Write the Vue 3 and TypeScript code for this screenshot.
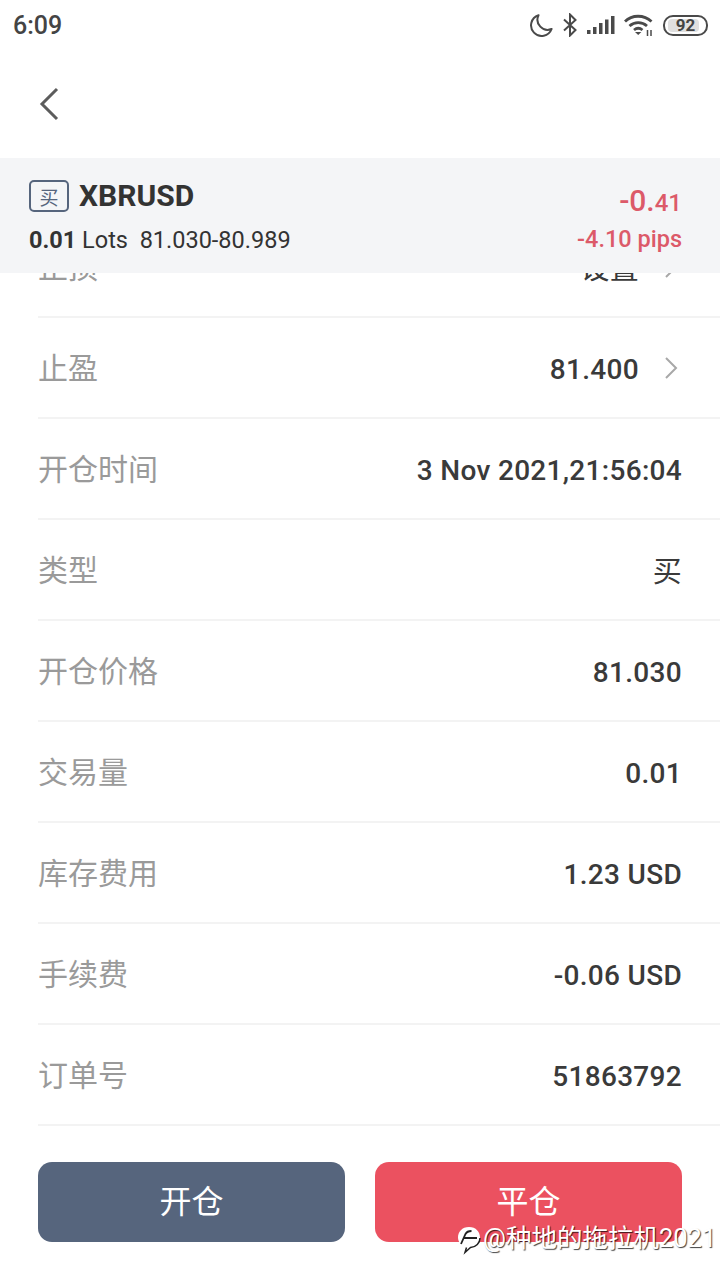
<template>
  <div class="page">
    <div class="status">
      <span class="status__time">6:09</span>
      <div class="status__icons">
        <svg class="ic-moon" width="24" height="24" viewBox="0 0 24 24">
          <path d="M9.500 2.200A10.600 10.600 0 1 0 22.600 16 A10.200 10.200 0 0 1 9.500 2.200Z" fill="none" stroke="#4a4a4a" stroke-width="2" stroke-linejoin="round" />
        </svg>
        <svg width="16" height="24" viewBox="0 0 16 24">
          <path d="M2 6.500 13.500 17 8 22.500V1.500L13.500 7 2 17.500" fill="none" stroke="#4a4a4a" stroke-width="2" />
        </svg>
        <svg width="28" height="20" viewBox="0 0 28 20">
          <g fill="#4a4a4a">
            <rect x="0" y="15" width="3.500" height="4" />
            <rect x="6" y="12" width="3.500" height="7" />
            <rect x="12" y="8" width="3.500" height="11" />
            <rect x="18" y="4.500" width="3.500" height="14.500" />
            <rect x="24" y="1" width="3.500" height="18" />
          </g>
        </svg>
        <svg width="30" height="24" viewBox="0 0 30 24">
          <g fill="none" stroke="#4a4a4a" stroke-width="2.800">
            <path d="M1 8.500C8 1.500 20 1.500 27.500 8.500" />
            <path d="M5.500 13C10.500 8.500 18 8.500 23 13" />
            <path d="M10 17C12.500 15 16 15 18.500 17" />
          </g>
          <path d="M14.200 22 11 19h6.400Z" fill="#4a4a4a" />
          <path d="M23.500 17v6M27 17v6" stroke="#4a4a4a" stroke-width="1.500" />
        </svg>
        <div class="battery">
          <span class="battery__fill"></span>
          <span class="battery__num">92</span>
        </div>
      </div>
    </div>

    <nav class="nav">
      <svg width="20" height="34" viewBox="0 0 20 34">
        <path d="M18 2 3 17l15 15" fill="none" stroke="#5c5c5c" stroke-width="3" />
      </svg>
    </nav>

    <header class="summary">
      <div class="summary__left">
        <div class="summary__title">
          <span class="tag">买</span>
          <span class="symbol">XBRUSD</span>
        </div>
        <div class="summary__sub"><b>0.01</b> Lots&nbsp; 81.030-80.989</div>
      </div>
      <div class="summary__right">
        <div class="profit">-0.<small>41</small></div>
        <div class="pips">-4.10 pips</div>
      </div>
    </header>

    <div class="list-clip">
      <ul class="list">
        <li v-for="row in rows" :key="row.label" class="row">
          <span class="row__label">{{ row.label }}</span>
          <span class="row__value" :class="{ 'row__value--cjk': row.cjk }">{{ row.value }}</span>
          <svg v-if="row.arrow" class="row__arrow" width="14" height="24" viewBox="0 0 14 24">
            <path d="M2 2l10 10L2 22" fill="none" stroke="#a8a8a8" stroke-width="2" />
          </svg>
        </li>
      </ul>
    </div>

    <footer class="actions">
      <button class="btn btn--open">开仓</button>
      <button class="btn btn--close">平仓</button>
    </footer>

    <div class="watermark">
      <svg width="26" height="30" viewBox="0 0 26 30">
        <path d="M13 2C6 2 2 7 2 12.500c0 5 4 9.500 10 9.500 1 0 2 0 3-.5C20 20 24 17 24 12.500 24 7 20 2 13 2Z" fill="#fff" />
        <path d="M24 13c0 5-4 9-9.500 9.500L9 27.500l1.500-5" fill="none" stroke="#222" stroke-width="1.500" />
        <path d="M5 19 9.500 9c1-2 3-3 6-3M8 13h13" fill="none" stroke="#222" stroke-width="1.800" />
      </svg>
      <span class="watermark__text">@种地的拖拉机2021</span>
    </div>
  </div>
</template>

<script setup lang="ts">
type Row = { label: string; value: string; arrow?: boolean; cjk?: boolean };

const rows: Row[] = [
  { label: '止损', value: '设置', arrow: true, cjk: true },
  { label: '止盈', value: '81.400', arrow: true },
  { label: '开仓时间', value: '3 Nov 2021,21:56:04' },
  { label: '类型', value: '买', cjk: true },
  { label: '开仓价格', value: '81.030' },
  { label: '交易量', value: '0.01' },
  { label: '库存费用', value: '1.23 USD' },
  { label: '手续费', value: '-0.06 USD' },
  { label: '订单号', value: '51863792' },
];
</script>

<style>
html,
body {
  margin: 0;
  background: #fff;
}
</style>

<style scoped>
.page {
  position: relative;
  width: 720px;
  height: 1280px;
  overflow: hidden;
  background: #fff;
  font-family: Roboto, "Noto Sans CJK SC", sans-serif;
  color: #333;
}
.status {
  height: 50px;
  display: flex;
  align-items: center;
  justify-content: space-between;
  padding: 0 12px 0 13px;
  box-sizing: border-box;
}
.status__time {
  font-size: 25px;
  font-weight: 500;
  color: #444;
}
.status__icons {
  display: flex;
  align-items: center;
  gap: 9px;
}
.battery {
  position: relative;
  width: 45px;
  height: 21px;
  box-sizing: border-box;
  border: 2px solid #4a4a4a;
  border-radius: 10px;
  display: flex;
  align-items: center;
  justify-content: center;
  overflow: hidden;
}
.battery__fill {
  position: absolute;
  left: 3px;
  top: 2px;
  bottom: 2px;
  width: 31px;
  background: #e0e0e0;
  border-radius: 4px;
}
.battery__num {
  position: relative;
  font-size: 17px;
  font-weight: 700;
  color: #444;
  line-height: 1;
}
.nav {
  height: 108px;
  display: flex;
  align-items: center;
  padding-left: 39px;
}
.summary {
  height: 115px;
  background: #f4f5f7;
  display: flex;
  justify-content: space-between;
  padding: 22px 38px 0 29px;
  box-sizing: border-box;
}
.summary__title {
  display: flex;
  align-items: center;
  gap: 10px;
}
.tag {
  width: 40px;
  height: 32px;
  box-sizing: border-box;
  border: 2px solid #56657d;
  border-radius: 5px;
  display: flex;
  align-items: center;
  justify-content: center;
  font-size: 19px;
  color: #56657d;
}
.symbol {
  font-size: 30px;
  font-weight: 700;
  line-height: 32px;
}
.summary__sub {
  margin-top: 13px;
  font-size: 23.500px;
  line-height: 30px;
  white-space: nowrap;
}
.summary__sub b {
  font-weight: 700;
}
.summary__right {
  text-align: right;
  color: #dc5a69;
  font-weight: 500;
}
.profit {
  font-size: 30px;
  line-height: 42px;
}
.profit small {
  font-size: 24px;
}
.pips {
  font-size: 23.500px;
  line-height: 30px;
}
.list-clip {
  height: 889px;
  overflow: hidden;
}
.list {
  list-style: none;
  margin: -56px 0 0;
  padding: 0 0 0 38px;
}
.row {
  height: 101px;
  box-sizing: border-box;
  border-bottom: 2px solid #f3f3f3;
  display: flex;
  align-items: center;
  padding-right: 38px;
}
.row__label {
  color: #9a9a9a;
  font-size: 30px;
  line-height: 40px;
  flex: 1;
  margin-top: 3px;
}
.row__value {
  color: #3a3a3a;
  font-size: 28px;
  font-weight: 500;
  letter-spacing: 0.300px;
  margin-top: 3px;
}
.row__value--cjk {
  font-size: 29px;
  font-weight: 400;
  margin-top: -2px;
}
.row__arrow {
  margin-left: 25px;
  margin-right: 4px;
}
.actions {
  position: absolute;
  left: 38px;
  right: 38px;
  top: 1162px;
  display: grid;
  grid-template-columns: 307px 307px;
  justify-content: space-between;
}
.btn {
  height: 80px;
  border: 0;
  border-radius: 14px;
  color: #fff;
  font-family: inherit;
  font-size: 32px;
  line-height: 1;
  padding: 0;
}
.btn--open {
  background: #56657d;
}
.btn--close {
  background: #eb5160;
}
.watermark {
  position: absolute;
  left: 456px;
  top: 1217px;
  display: flex;
  align-items: center;
  gap: 1px;
  font-size: 25.500px;
  color: #fff;
  white-space: nowrap;
  text-shadow: 1px 1px 1px rgba(0, 0, 0, 0.75);
}
.watermark__text {
  margin-bottom: 9px;
}
</style>
